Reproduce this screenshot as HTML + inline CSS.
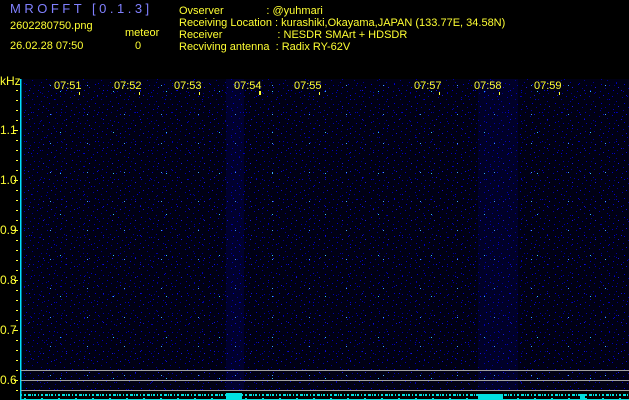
<!DOCTYPE html>
<html><head><meta charset="utf-8"><style>
html,body{margin:0;padding:0;background:#000;width:629px;height:400px;overflow:hidden;position:relative;font-family:"Liberation Sans",sans-serif;}
.t{position:absolute;color:#ffff33;font-size:11px;white-space:pre;line-height:12px;}
</style></head><body>
<div class="t" style="left:10px;top:3px;color:#8080ff;font-size:13px;letter-spacing:3.5px;">MROFFT [0.1.3]</div>
<div class="t" style="left:10px;top:20px;">2602280750.png</div>
<div class="t" style="left:125px;top:27px;">meteor</div>
<div class="t" style="left:10px;top:40px;">26.02.28 07:50</div>
<div class="t" style="left:135px;top:40px;">0</div>
<div class="t" style="left:179px;top:5px;">Ovserver              : @yuhmari</div>
<div class="t" style="left:179px;top:17px;">Receiving Location : kurashiki,Okayama,JAPAN (133.77E, 34.58N)</div>
<div class="t" style="left:179px;top:29px;">Receiver                  : NESDR SMArt + HDSDR</div>
<div class="t" style="left:179px;top:41px;">Recviving antenna  : Radix RY-62V</div>
<svg style="position:absolute;left:0;top:0" width="629" height="400">
<defs>
<pattern id="p" width="23" height="19" patternUnits="userSpaceOnUse">
<rect width="23" height="19" fill="#000014"/>
<rect x="1" y="2" width="1" height="1" fill="#0000b0"/><rect x="5" y="0" width="1" height="1" fill="#1010d0"/>
<rect x="9" y="4" width="1" height="1" fill="#000090"/><rect x="14" y="1" width="1" height="1" fill="#0000c0"/>
<rect x="18" y="6" width="1" height="1" fill="#0000a0"/><rect x="3" y="8" width="1" height="1" fill="#0000d0"/>
<rect x="11" y="9" width="1" height="1" fill="#0000b0"/><rect x="20" y="11" width="1" height="1" fill="#1818e0"/>
<rect x="7" y="12" width="1" height="1" fill="#000098"/><rect x="15" y="14" width="1" height="1" fill="#0000c8"/>
<rect x="2" y="15" width="1" height="1" fill="#0000a8"/><rect x="10" y="17" width="1" height="1" fill="#0000b8"/>
<rect x="19" y="17" width="1" height="1" fill="#000090"/><rect x="16" y="9" width="1" height="1" fill="#000080"/>
</pattern>
<pattern id="q" width="37" height="29" patternUnits="userSpaceOnUse">
<rect x="3" y="5" width="1" height="1" fill="#0000b0"/><rect x="17" y="12" width="1" height="1" fill="#0000c8"/>
<rect x="29" y="3" width="1" height="1" fill="#1010d8"/><rect x="9" y="21" width="1" height="1" fill="#0000a0"/>
<rect x="24" y="25" width="1" height="1" fill="#0000b8"/><rect x="13" y="27" width="1" height="1" fill="#40a0ff"/>
</pattern>
<pattern id="r" width="53" height="41" patternUnits="userSpaceOnUse">
<rect x="7" y="9" width="1" height="1" fill="#30c0ff"/><rect x="31" y="30" width="1" height="1" fill="#0000d0"/>
<rect x="44" y="14" width="1" height="1" fill="#0000b0"/>
</pattern>
<pattern id="b" width="17" height="6" patternUnits="userSpaceOnUse">
<rect x="0" y="3" width="2" height="3" fill="#00e0e0"/><rect x="4" y="4" width="1" height="2" fill="#00e0e0"/>
<rect x="7" y="2" width="2" height="4" fill="#00e0e0"/><rect x="11" y="4" width="3" height="2" fill="#00e0e0"/><rect x="15" y="3" width="1" height="3" fill="#00e0e0"/>
</pattern>
</defs>
<rect x="20" y="79" width="609" height="311" fill="url(#p)"/>
<rect x="20" y="79" width="609" height="311" fill="url(#q)"/>
<rect x="20" y="79" width="609" height="311" fill="url(#r)"/>
<rect x="226" y="79" width="18" height="311" fill="#0000c0" opacity="0.15"/>
<rect x="478" y="79" width="40" height="311" fill="#0000c0" opacity="0.12"/>
<rect x="20" y="79" width="1.5" height="321" fill="#00e0ff"/>
<g stroke="#a0a0a0" stroke-width="1"><line x1="21" y1="370.5" x2="629" y2="370.5"/><line x1="21" y1="380.5" x2="629" y2="380.5"/><line x1="21" y1="390.5" x2="629" y2="390.5"/></g>
<rect x="21" y="394" width="608" height="6" fill="url(#b)"/>
<rect x="21" y="399" width="608" height="1" fill="#00e0e0"/>
<g fill="#00e0e0"><rect x="226" y="393" width="16" height="6"/><rect x="478" y="394" width="25" height="5"/><rect x="580" y="394" width="5" height="5"/></g>
<g fill="#ffff33"><rect x="79" y="92" width="1" height="3"/><rect x="139" y="92" width="1" height="3"/><rect x="199" y="92" width="1" height="3"/><rect x="259" y="91" width="2" height="4"/><rect x="319" y="92" width="1" height="3"/><rect x="439" y="92" width="1" height="3"/><rect x="499" y="92" width="1" height="3"/><rect x="559" y="92" width="1" height="3"/></g>
<g fill="#ffff33" font-family="Liberation Sans, sans-serif" font-size="11">
<text x="54" y="89">07:51</text><text x="114" y="89">07:52</text><text x="174" y="89">07:53</text><text x="234" y="89">07:54</text><text x="294" y="89">07:55</text><text x="414" y="89">07:57</text><text x="474" y="89">07:58</text><text x="534" y="89">07:59</text>
</g>
<g fill="#ffff33" font-family="Liberation Sans, sans-serif" font-size="12">
<text x="0" y="85">kHz</text>
<text x="0" y="134">1.1</text><text x="0" y="184">1.0</text><text x="0" y="234">0.9</text><text x="0" y="284">0.8</text><text x="0" y="334">0.7</text><text x="0" y="384">0.6</text>
</g>
<g fill="#ffff33">
<rect x="16" y="90" width="2" height="1"/><rect x="16" y="100" width="2" height="1"/><rect x="16" y="110" width="2" height="1"/><rect x="16" y="120" width="2" height="1"/><rect x="14" y="130" width="4" height="1"/>
<rect x="16" y="140" width="2" height="1"/><rect x="16" y="150" width="2" height="1"/><rect x="16" y="160" width="2" height="1"/><rect x="16" y="170" width="2" height="1"/><rect x="14" y="180" width="4" height="1"/>
<rect x="16" y="190" width="2" height="1"/><rect x="16" y="200" width="2" height="1"/><rect x="16" y="210" width="2" height="1"/><rect x="16" y="220" width="2" height="1"/><rect x="14" y="230" width="4" height="1"/>
<rect x="16" y="240" width="2" height="1"/><rect x="16" y="250" width="2" height="1"/><rect x="16" y="260" width="2" height="1"/><rect x="16" y="270" width="2" height="1"/><rect x="14" y="280" width="4" height="1"/>
<rect x="16" y="290" width="2" height="1"/><rect x="16" y="300" width="2" height="1"/><rect x="16" y="310" width="2" height="1"/><rect x="16" y="320" width="2" height="1"/><rect x="14" y="330" width="4" height="1"/>
<rect x="16" y="340" width="2" height="1"/><rect x="16" y="350" width="2" height="1"/><rect x="16" y="360" width="2" height="1"/><rect x="16" y="370" width="2" height="1"/><rect x="14" y="380" width="4" height="1"/><rect x="16" y="390" width="2" height="1"/>
</g>
</svg>
</body></html>
